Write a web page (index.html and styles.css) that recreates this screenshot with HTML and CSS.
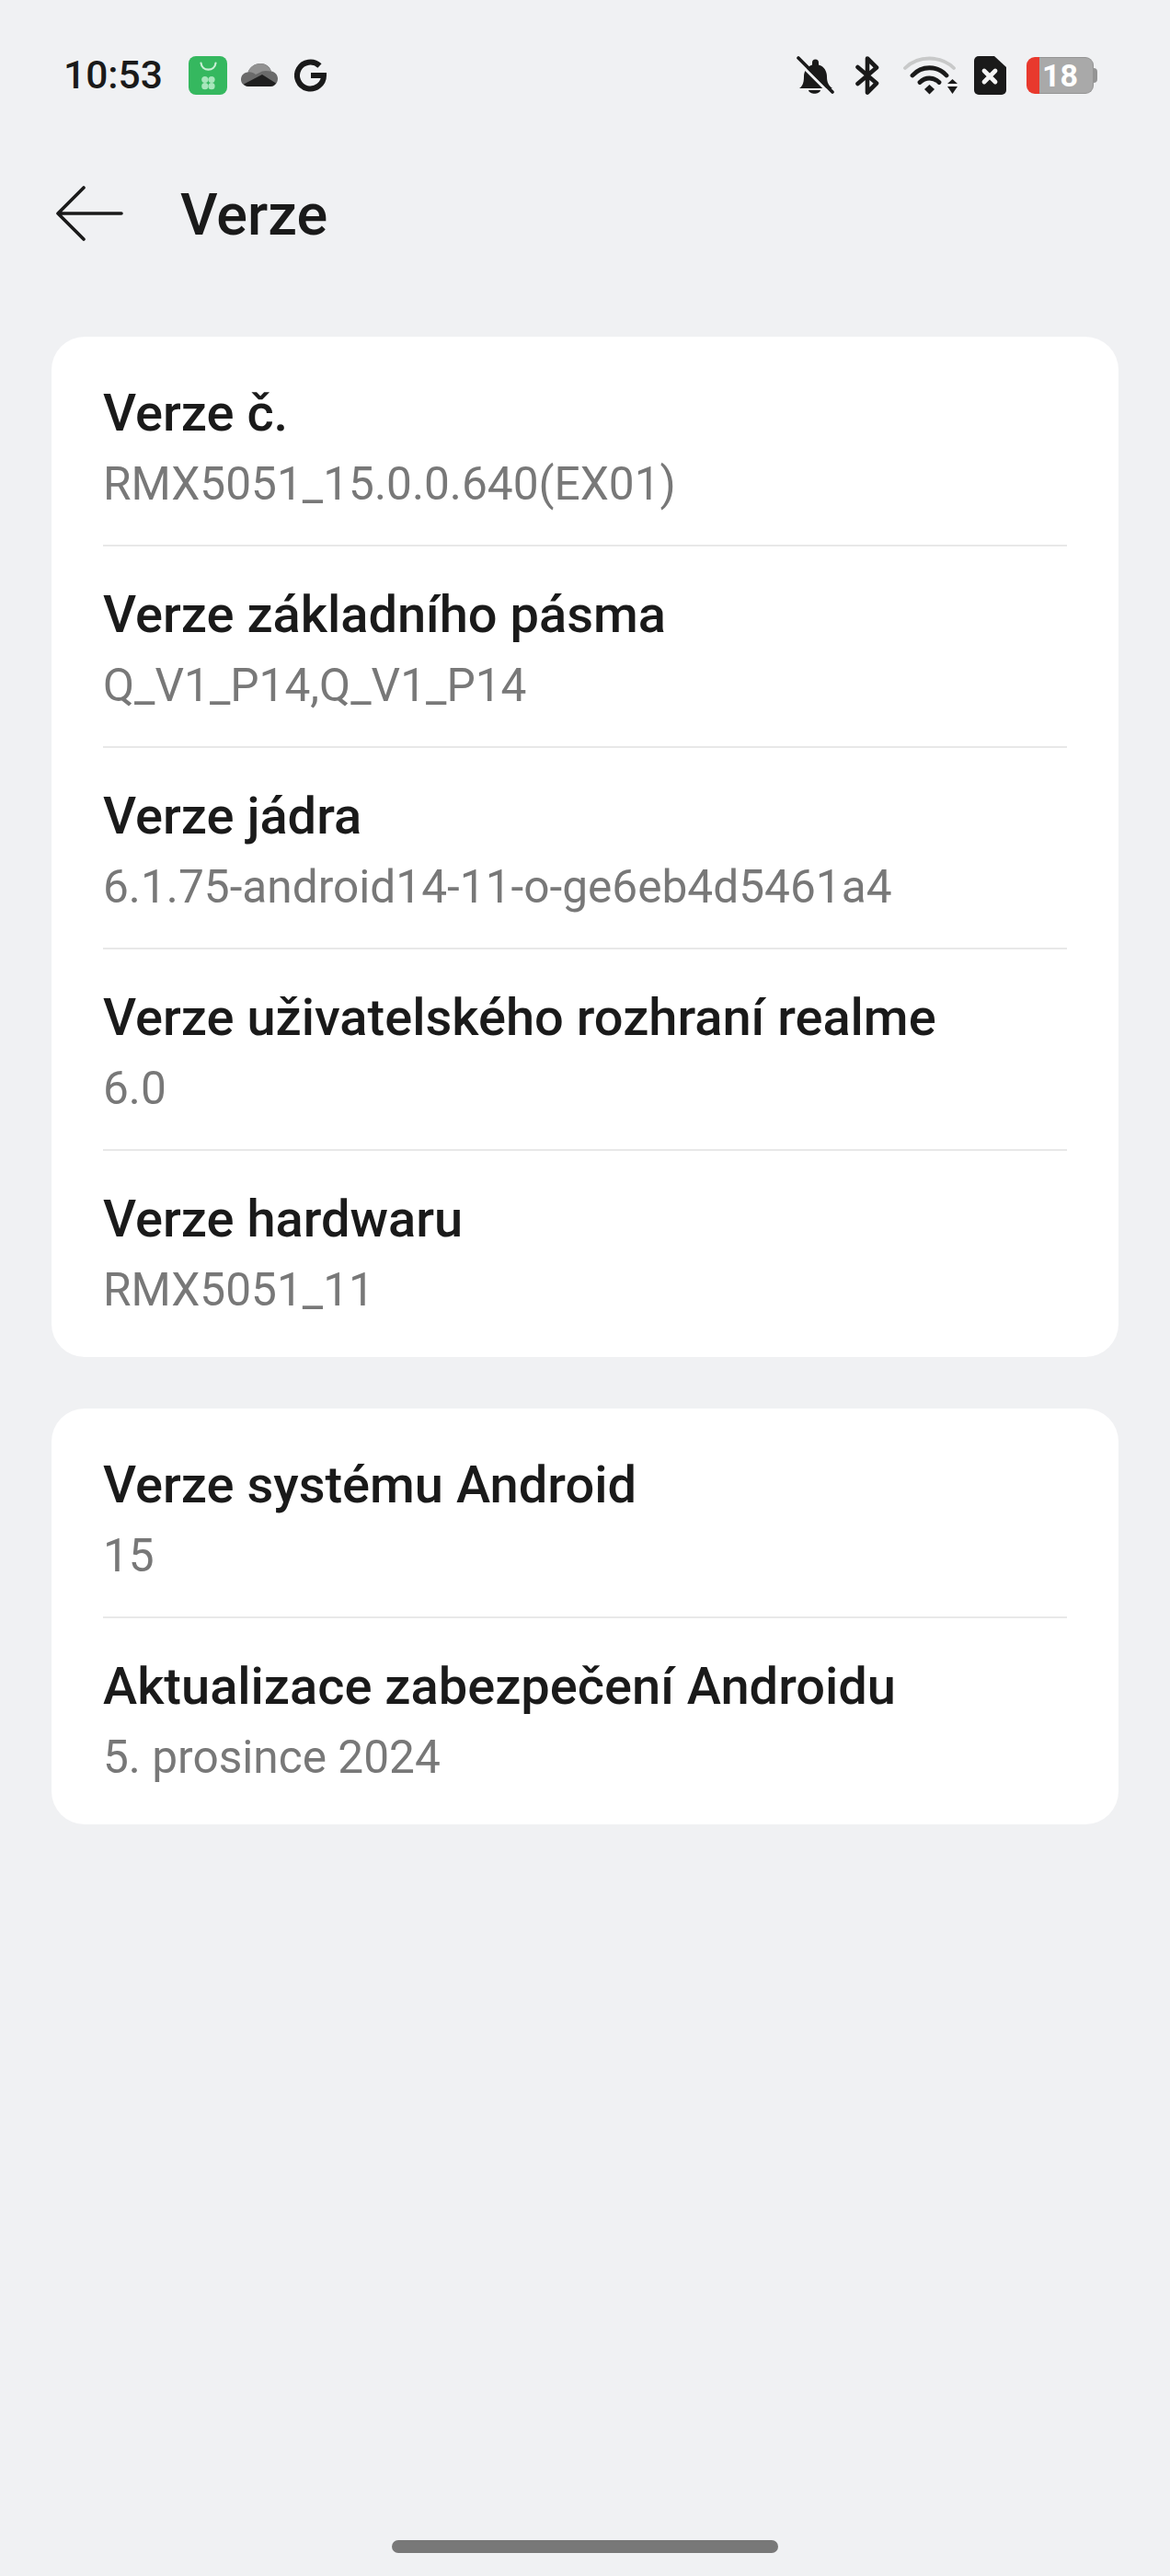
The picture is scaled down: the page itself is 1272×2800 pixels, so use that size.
FILE: index.html
```html
<!DOCTYPE html>
<html lang="cs">
<head>
  <meta charset="UTF-8">
  <title>Verze</title>
  <link rel="stylesheet" href="styles.css">
</head>
<body>
  <div class="screen">
    <div class="status-bar">
      <span class="time">10:53</span>
      <svg class="ic-store" width="42" height="42" viewBox="0 0 42 42">
        <rect width="42" height="42" rx="8" fill="#35b85f"/>
        <path d="M13.500 7.500c1 9.500 15 9.500 16 0" fill="none" stroke="#c9efd5" stroke-width="2.200" stroke-linecap="round"/>
        <g fill="#a8e6bc"><circle cx="17.800" cy="25.500" r="3.600"/><circle cx="25" cy="25.500" r="3.600"/><circle cx="17.800" cy="32.700" r="3.600"/><circle cx="25" cy="32.700" r="3.600"/></g>
      </svg>
      <svg class="ic-cloud" width="40" height="26" viewBox="0 0 40 26">
        <path d="M8 25C3 25 0 21 0 17.500 0 13 3 10 7.500 9.500 9.500 4 15 0 21 0c6 0 10 3 12 8.500 4 .5 7 4 7 8 0 5-4 8.500-8 8.500z" fill="#6a6a6a"/>
        <path d="M7.500 9.500c3-.5 6 .5 8.500 2.500l7-3.500c3-1 6-.5 10 0C30 3 26 0 21 0 15 0 9.500 4 7.500 9.500z" fill="#919191"/>
        <path d="M3 22.500L23 12l15 9.500C36.500 24 34 25 32 25H8c-2 0-4-1-5-2.500z" fill="#1f1f1f"/>
      </svg>
      <svg class="ic-g" width="36" height="36" viewBox="0 0 36 36">
        <path d="M27.500 7.500A14.500 14.500 0 1 0 32 18H18" fill="none" stroke="#1a1a1a" stroke-width="6"/>
      </svg>
      <span class="spacer"></span>
      <svg class="ic-bell" width="42" height="42" viewBox="0 0 42 42">
        <path d="M3 35c3-2 5-5 5-13 0-6 4-11 9-12.500V7a3.500 3.500 0 0 1 7 0v2.500c6 1.500 9 7 9 13 0 6 2 10 6 12.500z" fill="#1a1a1a"/>
        <path d="M13 37h13c-1 5-12 5-13 0z" fill="#1a1a1a"/>
        <path d="M-.3 4.300l37 37" stroke="#f0f1f3" stroke-width="3"/>
        <path d="M2 2l37 37" stroke="#1a1a1a" stroke-width="3.600" stroke-linecap="round"/>
      </svg>
      <svg class="ic-bt" width="26" height="42" viewBox="0 0 26 42">
        <path d="M2.500 12L23 29.500 13 39.500V2.500L23 12.500 2.500 30" fill="none" stroke="#1a1a1a" stroke-width="4.600" stroke-linejoin="round" stroke-linecap="round"/>
      </svg>
      <svg class="ic-wifi" width="60" height="42" viewBox="0 0 60 42">
        <path d="M2 13c14-14 39-14 53 0" fill="none" stroke="#c8c9c9" stroke-width="3.800" stroke-linecap="round"/>
        <path d="M10 21c10-11 27-11 37 0" fill="none" stroke="#1a1a1a" stroke-width="4.800" stroke-linecap="round"/>
        <path d="M18 28.500c6-6 15-6 21 0" fill="none" stroke="#1a1a1a" stroke-width="4.800" stroke-linecap="round"/>
        <path d="M23 36l5.500-5 5.500 5-5.500 5.500z" fill="#1a1a1a"/>
        <path d="M48 30l5.500-5 5.500 5zM48 33h11l-5.500 8z" fill="#1a1a1a"/>
      </svg>
      <svg class="ic-sim" width="36" height="42" viewBox="0 0 36 42">
        <path d="M5 0h17l13 12v25a5 5 0 0 1-5 5H5a5 5 0 0 1-5-5V5a5 5 0 0 1 5-5z" fill="#1a1a1a"/>
        <path d="M11 16l12 12M23 16L11 28" stroke="#f4f4f4" stroke-width="4.800" stroke-linecap="round"/>
      </svg>
      <div class="battery">
        <span class="battery-fill"></span>
        <span class="battery-body"><span class="battery-num">18</span></span>
        <span class="battery-nub"></span>
      </div>
    </div>

    <div class="top-bar">
      <svg class="back" width="74" height="60" viewBox="0 0 74 60">
        <path d="M31 2L3 30l28 28M3 30h69" fill="none" stroke="#1a1a1a" stroke-width="3.600" stroke-linecap="round" stroke-linejoin="round"/>
      </svg>
      <h1>Verze</h1>
    </div>

    <div class="card">
      <div class="row"><div class="row-title">Verze č.</div><div class="row-value">RMX5051_15.0.0.640(EX01)</div></div>
      <div class="row"><div class="row-title">Verze základního pásma</div><div class="row-value">Q_V1_P14,Q_V1_P14</div></div>
      <div class="row"><div class="row-title">Verze jádra</div><div class="row-value">6.1.75-android14-11-o-ge6eb4d5461a4</div></div>
      <div class="row"><div class="row-title">Verze uživatelského rozhraní realme</div><div class="row-value">6.0</div></div>
      <div class="row"><div class="row-title">Verze hardwaru</div><div class="row-value">RMX5051_11</div></div>
    </div>

    <div class="card">
      <div class="row"><div class="row-title">Verze systému Android</div><div class="row-value">15</div></div>
      <div class="row"><div class="row-title">Aktualizace zabezpečení Androidu</div><div class="row-value">5. prosince 2024</div></div>
    </div>

    <div class="home-bar"></div>
  </div>
</body>
</html>
```

FILE: styles.css
```css
body {
  margin: 0;
  background-color: #f0f1f3;
  font-family: 'Roboto', sans-serif;
  color: #1a1a1a;
}

.screen {
  height: 2800px;
  display: flex;
  flex-direction: column;
  overflow: hidden;
}

.status-bar {
  height: 44px;
  margin-top: 60px;
  padding: 0 79px 0 69px;
  display: flex;
  align-items: center;
}

.time {
  width: 136px;
  padding-bottom: 2px;
  font-size: 42.500px;
  font-weight: 500;
}

.ic-store { margin-right: 15px; }
.ic-cloud { margin-right: 18px; }
.spacer { flex: 1; }
.ic-bell { margin-right: 22px; }
.ic-bt { margin-right: 26px; }
.ic-wifi { margin-right: 17px; }
.ic-sim { margin-right: 21px; }

.battery {
  width: 77px;
  height: 40px;
  display: flex;
  align-items: center;
}

.battery-fill {
  width: 14px;
  height: 100%;
  border-radius: 9px 0 0 9px;
  background-color: #e8392d;
}

.battery-body {
  flex: 1;
  height: 100%;
  box-sizing: border-box;
  border: 1px solid #949494;
  border-left: none;
  border-radius: 0 9px 9px 0;
  background-color: #a9a9a9;
  display: flex;
  align-items: center;
  justify-content: center;
}

.battery-num {
  margin-right: 13px;
  color: #fff;
  font-size: 34px;
  font-weight: 700;
  line-height: 1;
}

.battery-nub {
  width: 4px;
  height: 16px;
  border-radius: 0 4px 4px 0;
  background-color: #949494;
}

.top-bar {
  height: 60px;
  margin-top: 98px;
  margin-bottom: 104px;
  padding-left: 60px;
  display: flex;
  align-items: center;
}

.top-bar h1 {
  margin: 0 0 0 62px;
  padding-top: 2px;
  font-size: 63px;
  font-weight: 500;
}

.card {
  margin: 0 56px 56px;
  background: white;
  border-radius: 36px;
}

.row {
  margin: 0 56px;
  height: 219px;
  padding-top: 40px;
  box-sizing: border-box;
  border-bottom: 2px solid #e8e8e8;
}

.row:first-child {
  height: 228px;
  padding-top: 49px;
}

.row:last-child {
  height: 224px;
  border-bottom: none;
}

.row-title {
  font-size: 56px;
  font-weight: 500;
  line-height: 68px;
}

.row-value {
  margin-top: 10px;
  font-size: 49.600px;
  line-height: 66px;
  color: #787878;
}

.home-bar {
  width: 420px;
  height: 14px;
  margin: auto auto 25px;
  border-radius: 7px;
  background-color: #787878;
}
```
